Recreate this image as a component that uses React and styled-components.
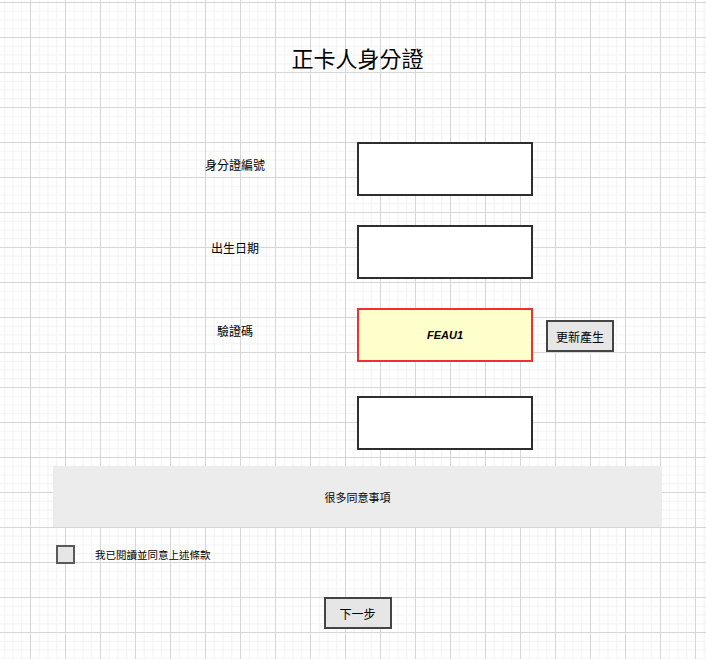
import styled, { createGlobalStyle } from "styled-components";

const GlobalStyle = createGlobalStyle`
  html, body {
    margin: 0;
    padding: 0;
  }
  body {
    min-height: 100vh;
    background-color: #fff;
    background-image:
      linear-gradient(to right, #d6d6d6 1px, transparent 1px),
      linear-gradient(to bottom, #d6d6d6 1px, transparent 1px),
      linear-gradient(to right, #f2f2f2 1px, transparent 1px),
      linear-gradient(to bottom, #f2f2f2 1px, transparent 1px);
    background-size: 35px 35px, 35px 35px, 8.75px 8.75px, 8.75px 8.75px;
    background-position: 30px 0, 0 2px, 30px 0, 0 2px;
    font-family: "Noto Sans CJK TC", "Noto Sans", sans-serif;
    color: #000;
  }
`;

const Page = styled.div`
  width: 706px;
  padding: 43px 0 0 53px;
  box-sizing: border-box;
`;

const Title = styled.h1`
  width: 609px;
  margin: 0 0 71px;
  font-size: 22px;
  line-height: 28px;
  font-weight: 400;
  text-align: center;
`;

const Rows = styled.div`
  display: flex;
  flex-direction: column;
  gap: 29px;
  padding-left: 122px;
`;

const Row = styled.div`
  display: flex;
  align-items: flex-start;
  margin-top: ${(p) => p.$extra || 0}px;
`;

const Label = styled.div`
  width: 120px;
  margin-right: 62px;
  padding-top: 15px;
  font-size: 12px;
  line-height: 16px;
  text-align: center;
`;

const Field = styled.div`
  width: 176px;
  height: 54px;
  box-sizing: border-box;
  border: 2px solid #2e2e2e;
  background: #fff;
`;

const Captcha = styled(Field)`
  display: flex;
  align-items: center;
  justify-content: center;
  border-color: #f03030;
  background: #ffffcc;
  font-family: "Liberation Sans", Arial, sans-serif;
  font-style: italic;
  font-weight: bold;
  font-size: 11px;
`;

const Button = styled.button`
  width: ${(p) => p.$w || 68}px;
  height: 32px;
  margin: 0;
  padding: 0;
  box-sizing: border-box;
  border: 2px solid #444;
  background: #e6e6e6;
  font-family: "Noto Sans CJK TC", "Noto Sans", sans-serif;
  font-size: 12px;
  color: #000;
`;

const RefreshButton = styled(Button)`
  margin: 12px 0 0 13px;
`;

const Terms = styled.div`
  width: 609px;
  height: 61px;
  margin-top: 16px;
  background: #ececec;
  display: flex;
  align-items: center;
  justify-content: center;
  font-size: 11px;
`;

const AgreeRow = styled.label`
  display: flex;
  align-items: center;
  margin: 18px 0 0 3px;
  font-size: 10.5px;
`;

const Box = styled.span`
  width: 19px;
  height: 19px;
  box-sizing: border-box;
  border: 2px solid #5a5a5a;
  background: #e6e6e6;
  margin-right: 20px;
`;

const Footer = styled.div`
  width: 609px;
  display: flex;
  justify-content: center;
  margin-top: 33px;
`;

export default function App() {
  return (
    <>
      <GlobalStyle />
      <Page>
        <Title>正卡人身分證</Title>
        <Rows>
          <Row>
            <Label>身分證編號</Label>
            <Field />
          </Row>
          <Row>
            <Label>出生日期</Label>
            <Field />
          </Row>
          <Row>
            <Label>驗證碼</Label>
            <Captcha>FEAU1</Captcha>
            <RefreshButton>更新產生</RefreshButton>
          </Row>
          <Row $extra={5}>
            <Label />
            <Field />
          </Row>
        </Rows>
        <Terms>很多同意事項</Terms>
        <AgreeRow>
          <Box />
          我已閱讀並同意上述條款
        </AgreeRow>
        <Footer>
          <Button>下一步</Button>
        </Footer>
      </Page>
    </>
  );
}
